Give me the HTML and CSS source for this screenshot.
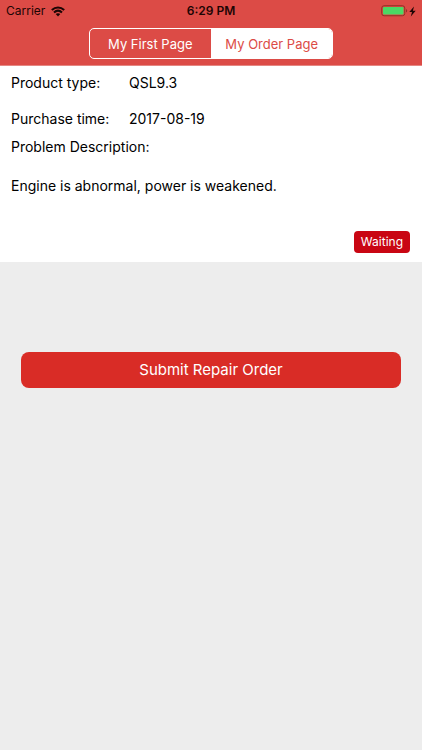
FILE: index.html
```html
<!DOCTYPE html>
<html lang="en">
<head>
<meta charset="utf-8">
<meta name="viewport" content="width=device-width, initial-scale=1">
<title>My Order Page</title>
<link rel="stylesheet" href="styles.css">
</head>
<body>
<header class="top-bar">
  <div class="status">
    <div class="status-left">
      <span>Carrier</span>
      <svg class="wifi" viewBox="0 0 14 11" aria-hidden="true">
        <path d="M0.800 4C4.500 0.500 9.500 0.500 13.200 4M3 6.500C5.400 4.200 8.600 4.200 11 6.500" fill="none" stroke="currentColor" stroke-width="2"/>
        <path d="M4.700 8.100C6.100 6.900 7.900 6.900 9.300 8.100L7 10.500Z" fill="currentColor"/>
      </svg>
    </div>
    <span class="clock">6:29 PM</span>
    <div class="status-right">
      <svg class="battery" viewBox="0 0 27 12" aria-hidden="true">
        <rect x="0.750" y="0.750" width="23" height="10" rx="2.300" fill="none" stroke="#8f3126"/>
        <rect x="2" y="2" width="20.500" height="7.500" rx="1" fill="#4bd964"/>
        <path d="M25 4C26.600 4.400 26.600 7.100 25 7.500Z" fill="#8f3126"/>
      </svg>
      <svg class="bolt" viewBox="0 0 7 11" aria-hidden="true">
        <path d="M5 0.500L0.300 6H3L1.800 10.500L6.700 4.700H3.900Z" fill="currentColor"/>
      </svg>
    </div>
  </div>
  <nav class="segments" aria-label="Pages">
    <button class="segment" type="button">My First Page</button>
    <button class="segment segment-active" type="button" aria-pressed="true">My Order Page</button>
  </nav>
</header>
<main>
  <section class="order">
    <dl class="details">
      <dt>Product type:</dt><dd>QSL9.3</dd>
      <dt>Purchase time:</dt><dd>2017-08-19</dd>
    </dl>
    <h2 class="label">Problem Description:</h2>
    <p class="description">Engine is abnormal, power is weakened.</p>
    <div class="state"><span class="badge">Waiting</span></div>
  </section>
  <div class="actions">
    <button class="submit" type="button">Submit Repair Order</button>
  </div>
</main>
</body>
</html>
```
FILE: styles.css
```css
* {
  box-sizing: border-box;
}

body {
  margin: 0;
  min-height: 100vh;
  background: #ededed;
  color: #000;
  font-family: Inter, "Liberation Sans", sans-serif;
  font-size: 14px;
  line-height: 20px;
}

button {
  margin: 0;
  border: 0;
  font: inherit;
}

.top-bar {
  padding-bottom: 6px;
  border-bottom: 1px solid #e58782;
  background: #dc4b46;
}

.status {
  display: grid;
  grid-template-columns: 1fr auto 1fr;
  align-items: center;
  height: 22px;
  margin-bottom: 6px;
  padding: 0 6px;
  color: #1c0504;
  font-size: 12px;
}

.status-left,
.status-right {
  display: flex;
  align-items: center;
  gap: 6px;
}

.status-right {
  justify-content: flex-end;
  gap: 1px;
}

.clock {
  font-weight: 600;
}

.wifi {
  width: 14px;
  height: 11px;
}

.battery {
  width: 27px;
  height: 12px;
}

.bolt {
  width: 7px;
  height: 11px;
}

.segments {
  display: grid;
  grid-template-columns: 1fr 1fr;
  width: 58%;
  height: 31px;
  margin: 0 auto;
  overflow: hidden;
  border: 1px solid #fff;
  border-radius: 5px;
}

.segment {
  padding: 0;
  background: transparent;
  color: #fff;
  font-size: 13px;
}

.segment-active {
  background: #fff;
  color: #dc4b46;
}

.order {
  padding: 7px 12px 9px 11px;
  background: #fff;
}

.details {
  display: grid;
  grid-template-columns: 118px 1fr;
  row-gap: 16px;
  margin: 0 0 8px;
}

.details dd {
  margin: 0;
}

.label {
  margin: 0 0 19px;
  font-size: 14px;
  font-weight: 400;
}

.description {
  margin: 0 0 35px;
}

.state {
  display: flex;
  justify-content: flex-end;
}

.badge {
  padding: 1px 7px;
  border-radius: 4px;
  background: #c90613;
  color: #fff;
  font-size: 12px;
}

.actions {
  padding: 90px 21px;
}

.submit {
  width: 100%;
  height: 36px;
  border-radius: 8px;
  background: #d92c26;
  color: #fff;
  font-size: 15px;
}
```
